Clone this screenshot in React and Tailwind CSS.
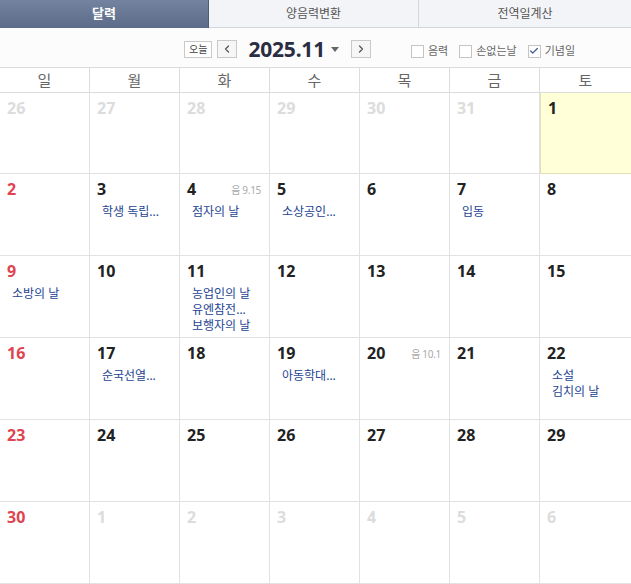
import { ChevronLeft, ChevronRight, Check } from "lucide-react";

const font = { fontFamily: '"Noto Sans", "Noto Sans CJK KR", sans-serif' };

const weekdays = ["일", "월", "화", "수", "목", "금", "토"];

const days = [
  { d: 26, other: true }, { d: 27, other: true }, { d: 28, other: true }, { d: 29, other: true },
  { d: 30, other: true }, { d: 31, other: true }, { d: 1, today: true },
  { d: 2 }, { d: 3, ev: ["학생 독립..."] }, { d: 4, lunar: "음 9.15", ev: ["점자의 날"] },
  { d: 5, ev: ["소상공인..."] }, { d: 6 }, { d: 7, ev: ["입동"] }, { d: 8 },
  { d: 9, ev: ["소방의 날"] }, { d: 10 }, { d: 11, ev: ["농업인의 날", "유엔참전...", "보행자의 날"] },
  { d: 12 }, { d: 13 }, { d: 14 }, { d: 15 },
  { d: 16 }, { d: 17, ev: ["순국선열..."] }, { d: 18 }, { d: 19, ev: ["아동학대..."] },
  { d: 20, lunar: "음 10.1" }, { d: 21 }, { d: 22, ev: ["소설", "김치의 날"] },
  { d: 23 }, { d: 24 }, { d: 25 }, { d: 26 }, { d: 27 }, { d: 28 }, { d: 29 },
  { d: 30 }, { d: 1, other: true }, { d: 2, other: true }, { d: 3, other: true },
  { d: 4, other: true }, { d: 5, other: true }, { d: 6, other: true },
];

function Box({ checked, label }) {
  return (
    <label className="flex items-center gap-[4px] text-[11px] text-[#666]">
      <span className="w-[13px] h-[13px] border border-[#c4c4c4] bg-white flex items-center justify-center">
        {checked && <Check className="w-[10px] h-[10px] text-[#3c5a8c]" strokeWidth={3} />}
      </span>
      {label}
    </label>
  );
}

export default function App() {
  return (
    <div className="w-[631px] h-[584px] bg-white overflow-hidden" style={font}>
      {/* tabs */}
      <div className="flex h-[28px]">
        <div className="w-[209px] flex items-center justify-center text-[13px] font-bold text-white bg-gradient-to-b from-[#7383a0] to-[#5c6c88] border-r border-[#4e5c75]">
          달력
        </div>
        <div className="w-[210px] flex items-center justify-center text-[12px] text-[#555] bg-[#f3f4f7] border-r border-b border-[#d3d6dd]">
          양음력변환
        </div>
        <div className="flex-1 flex items-center justify-center text-[12px] text-[#555] bg-[#f3f4f7] border-b border-[#d3d6dd]">
          전역일계산
        </div>
      </div>

      {/* toolbar */}
      <div className="h-[40px] pt-[3px] flex items-center border-b border-[#dcdcdc] bg-[#fcfcfc]">
        <button className="ml-[184px] h-[17px] px-[4px] border border-[#c9c9c9] bg-white text-[10px] leading-none text-[#444]">
          오늘
        </button>
        <button className="ml-[5px] w-[20px] h-[18px] border border-[#c9c9c9] bg-[#f6f6f6] flex items-center justify-center">
          <ChevronLeft className="w-[12px] h-[12px] text-[#555]" strokeWidth={2.5} />
        </button>
        <span className="ml-[11px] text-[21px] leading-none font-bold text-[#2b2d42] tracking-[-0.2px]">2025.11</span>
        <span className="ml-[6px] w-0 h-0 border-l-[4px] border-r-[4px] border-t-[5px] border-l-transparent border-r-transparent border-t-[#666]" />
        <button className="ml-[12px] w-[20px] h-[18px] border border-[#c9c9c9] bg-[#f6f6f6] flex items-center justify-center">
          <ChevronRight className="w-[12px] h-[12px] text-[#555]" strokeWidth={2.5} />
        </button>
        <div className="ml-[40px] mt-[4px] flex items-center gap-[11px]">
          <Box label="음력" />
          <Box label="손없는날" />
          <Box checked label="기념일" />
        </div>
      </div>

      {/* weekday header */}
      <div className="grid grid-cols-[repeat(6,90px)_1fr] h-[25px] border-b border-[#dcdcdc]">
        {weekdays.map((w, i) => (
          <div
            key={w}
            className={`flex items-center justify-center text-[15px] text-[#666] ${i < 6 ? "border-r border-[#dcdcdc]" : ""}`}
          >
            {w}
          </div>
        ))}
      </div>

      {/* days */}
      <div className="grid grid-cols-[repeat(6,90px)_1fr] grid-rows-[81px_repeat(5,82px)]">
        {days.map((c, i) => {
          const col = i % 7;
          let color = "text-[#222]";
          if (c.other) color = "text-[#dcdcdc]";
          else if (col === 0) color = "text-[#e04450]";
          return (
            <div
              key={i}
              className={`relative pl-[7px] pt-[5px] border-b ${col < 6 ? "border-r" : ""} ${
                c.today ? "bg-[#ffffd8] border-[#e2dfb8] border-l" : "border-[#e2e2e2]"
              }`}
            >
              <div className={`text-[16px] font-bold leading-[20px] ${color}`}>{c.d}</div>
              {c.lunar && (
                <span className="absolute right-[8px] top-[9px] text-[10px] text-[#aaa] tracking-[-0.3px]">
                  {c.lunar}
                </span>
              )}
              {c.ev && (
                <div className="mt-[5px] pl-[5px] flex flex-col">
                  {c.ev.map((e) => (
                    <span key={e} className="text-[12px] leading-[16px] text-[#234492]">
                      {e}
                    </span>
                  ))}
                </div>
              )}
            </div>
          );
        })}
      </div>
    </div>
  );
}
